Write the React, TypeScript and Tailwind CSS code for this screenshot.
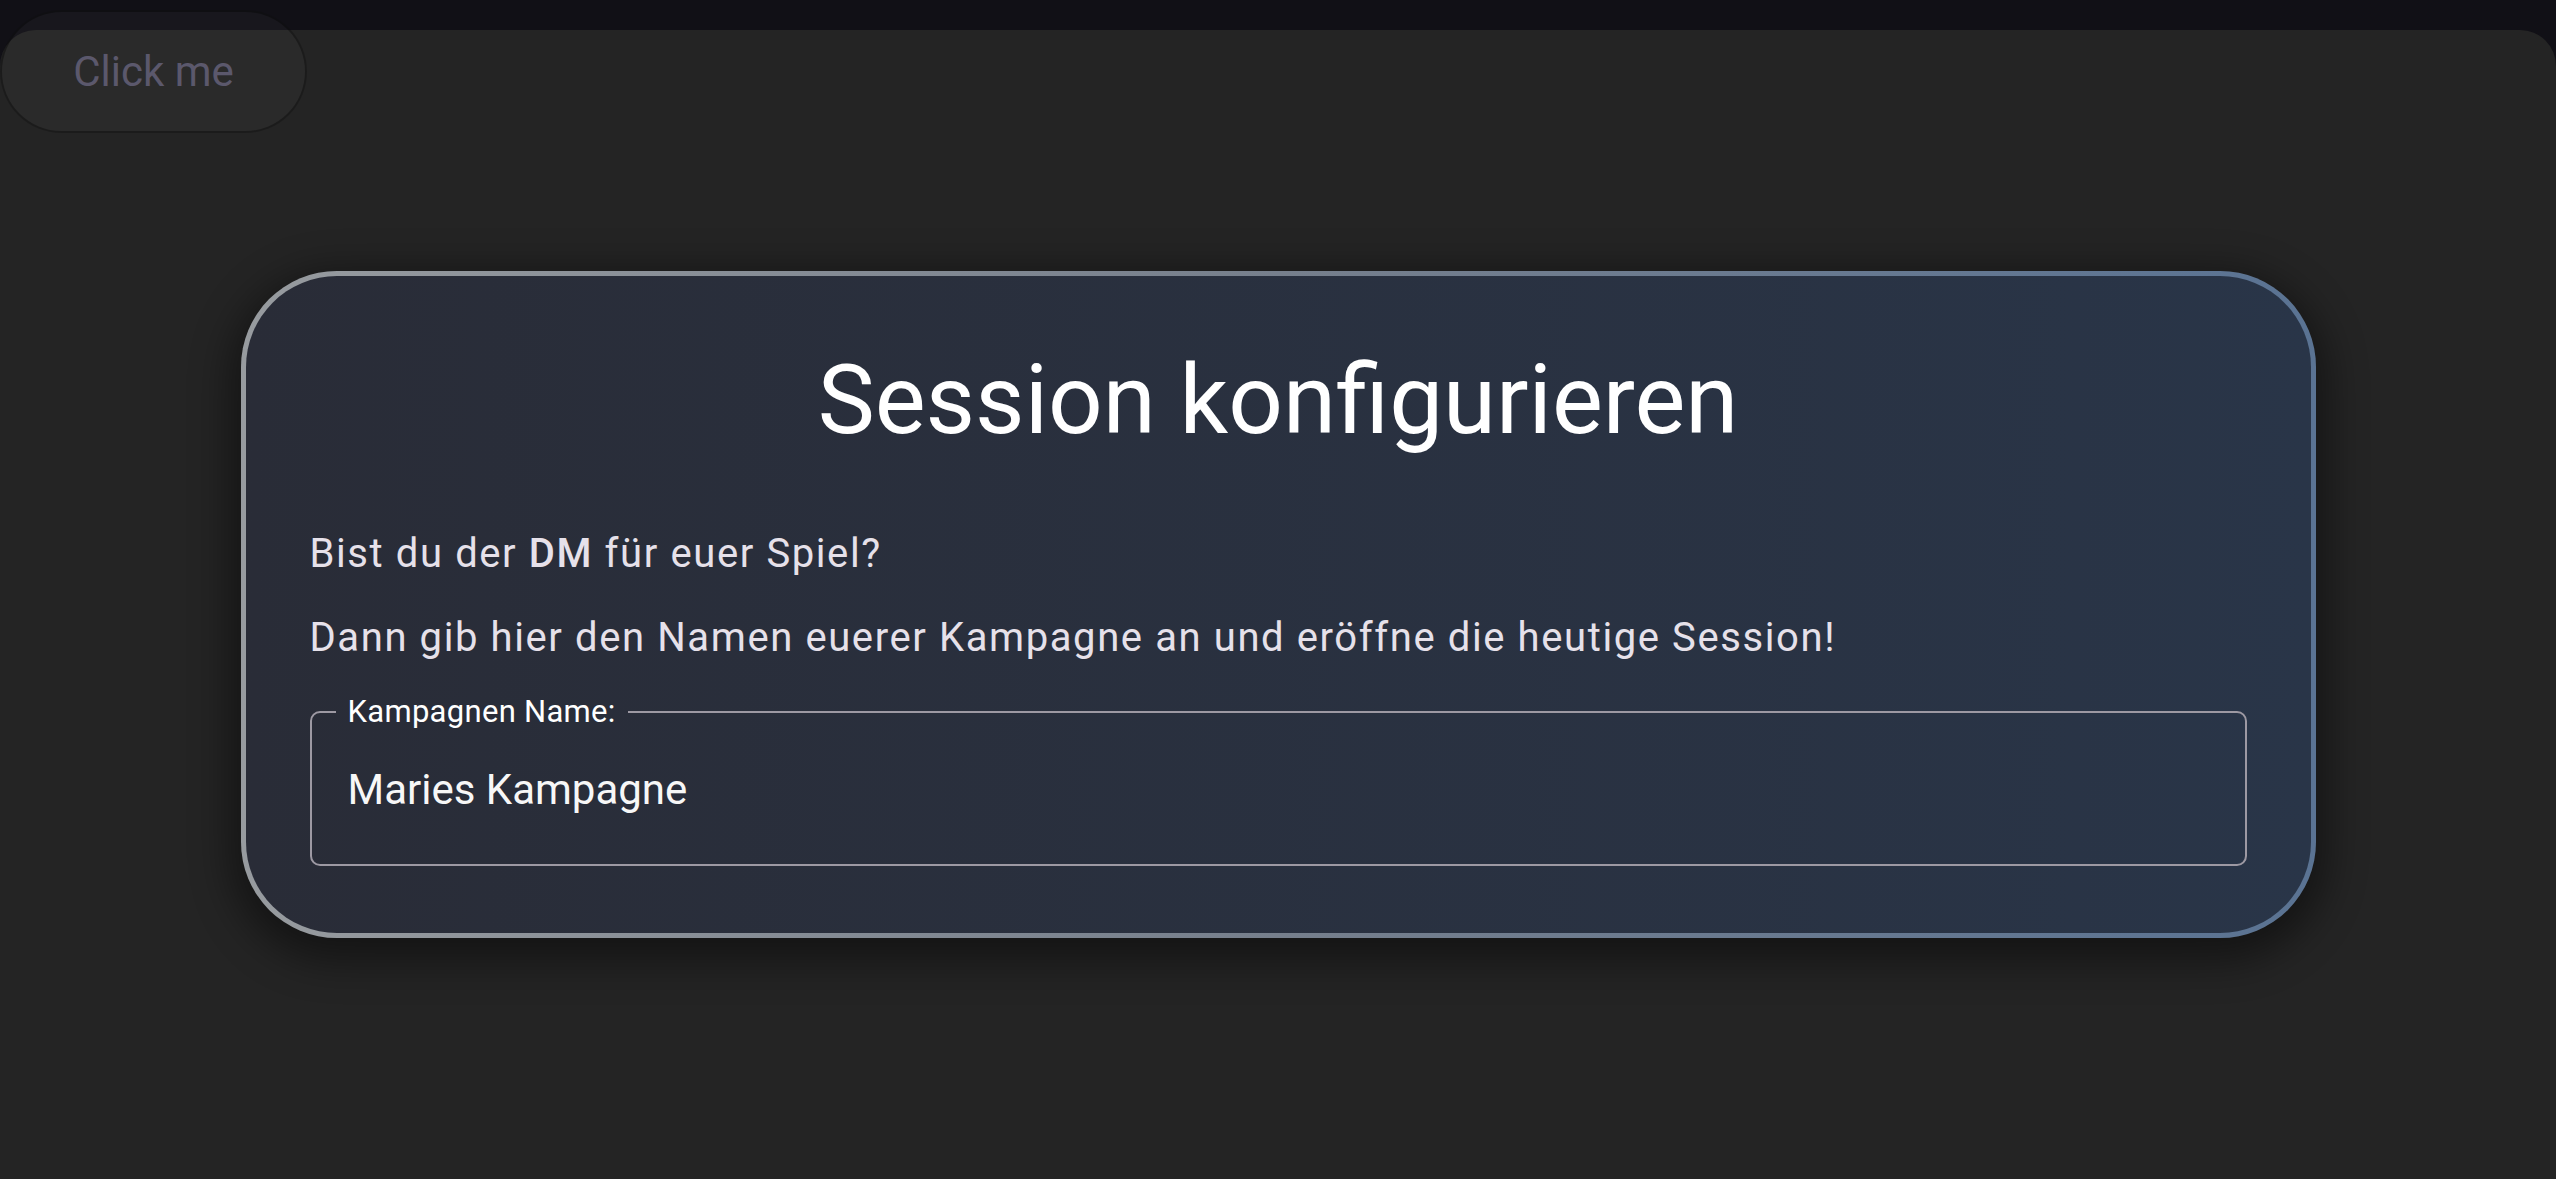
import { useState } from "react";

const App = () => {
  const [campaign, setCampaign] = useState("Maries Kampagne");

  return (
    <div className="relative min-h-screen w-full bg-[#111016] pt-[30px] font-['Roboto',sans-serif]">
      <button className="absolute left-0 top-[10px] h-[123px] w-[307px] rounded-full border-2 border-[rgba(0,0,0,0.35)] bg-[rgba(255,255,255,0.03)] text-[42px] leading-[50px] text-[#5b586c]">
        Click me
      </button>

      <main className="flex h-[1149px] w-full items-center justify-center rounded-t-[36px] bg-[#242424]">
        <div className="w-[2075px] rounded-[96px] bg-linear-to-r from-[#979b9f] via-[#767f8c] to-[#5a7393] p-[5px] shadow-[0_12px_40px_10px_rgba(0,0,0,0.45)]">
          <div className="flex flex-col rounded-[91px] bg-linear-to-r from-[#292c37] to-[#293548] px-[64px] pb-[67px] pt-[68px]">
            <h1 className="text-center text-[96px] font-normal leading-[112px] text-white">
              Session konfigurieren
            </h1>

            <p className="mt-[74px] text-[40px] leading-[47px] tracking-[1.6px] text-[#e6e1ea]">
              Bist du der <span className="font-medium">DM</span> für euer Spiel?
            </p>
            <p className="mt-[37px] text-[40px] leading-[47px] tracking-[1.6px] text-[#e6e1ea]">
              Dann gib hier den Namen euerer Kampagne an und eröffne die heutige Session!
            </p>

            <fieldset className="mt-[33px] rounded-[10px] border-2 border-[#9d99a3] px-[24px]">
              <legend className="px-[12px] text-[31px] leading-[36px] tracking-[0.3px] text-white">
                Kampagnen Name:
              </legend>
              <input
                className="block w-full bg-transparent pb-[49px] pl-[12px] pt-[35px] text-[42px] leading-[50px] text-[#f7f7f7] outline-none"
                value={campaign}
                onChange={(e) => setCampaign(e.target.value)}
              />
            </fieldset>
          </div>
        </div>
      </main>
    </div>
  );
};

export default App;
